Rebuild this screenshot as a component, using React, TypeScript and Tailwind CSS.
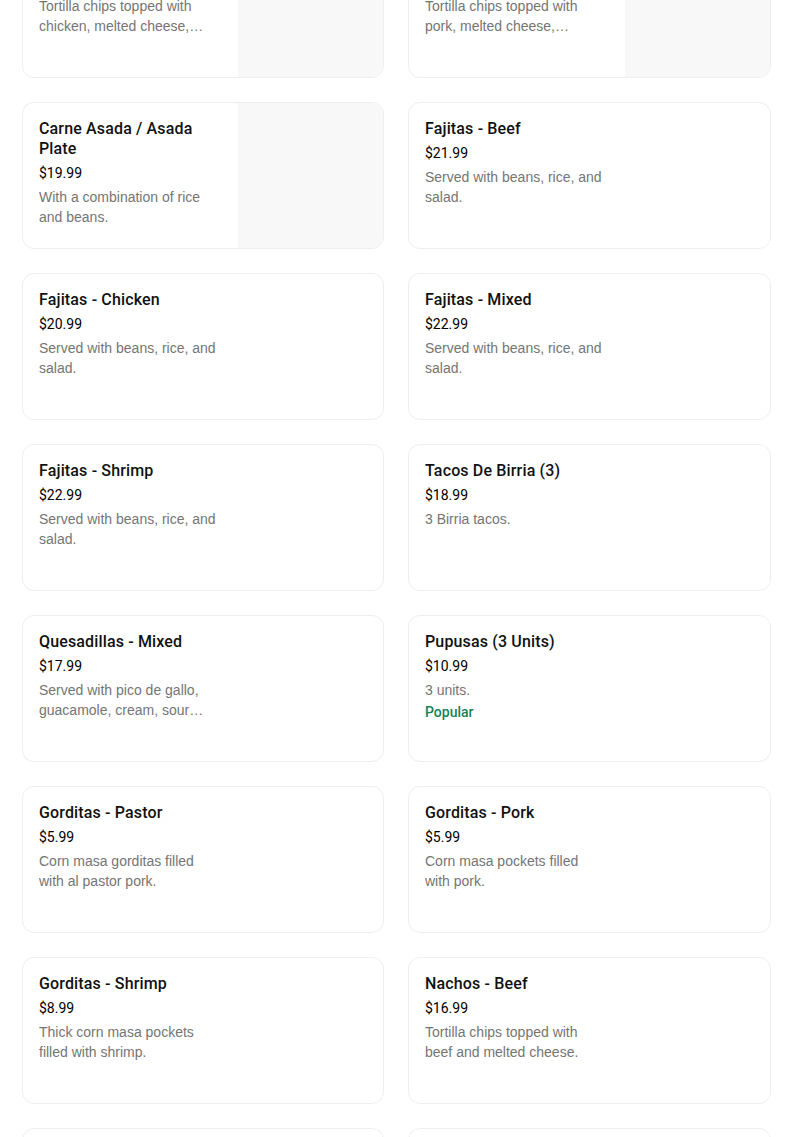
import React from "react";

type Item = { title: string; price: string; desc: string; image?: boolean; popular?: boolean };

const items: Item[] = [
  { title: "Nachos - Chicken", price: "$16.99", desc: "Tortilla chips topped with chicken, melted cheese, guacamole, pico de gallo and sour cream.", image: true },
  { title: "Nachos - Pork", price: "$16.99", desc: "Tortilla chips topped with pork, melted cheese, guacamole, pico de gallo and sour cream.", image: true },
  { title: "Carne Asada / Asada Plate", price: "$19.99", desc: "With a combination of rice and beans.", image: true },
  { title: "Fajitas - Beef", price: "$21.99", desc: "Served with beans, rice, and salad." },
  { title: "Fajitas - Chicken", price: "$20.99", desc: "Served with beans, rice, and salad." },
  { title: "Fajitas - Mixed", price: "$22.99", desc: "Served with beans, rice, and salad." },
  { title: "Fajitas - Shrimp", price: "$22.99", desc: "Served with beans, rice, and salad." },
  { title: "Tacos De Birria (3)", price: "$18.99", desc: "3 Birria tacos." },
  { title: "Quesadillas - Mixed", price: "$17.99", desc: "Served with pico de gallo, guacamole, cream, sour cream and salad." },
  { title: "Pupusas (3 Units)", price: "$10.99", desc: "3 units.", popular: true },
  { title: "Gorditas - Pastor", price: "$5.99", desc: "Corn masa gorditas filled with al pastor pork." },
  { title: "Gorditas - Pork", price: "$5.99", desc: "Corn masa pockets filled with pork." },
  { title: "Gorditas - Shrimp", price: "$8.99", desc: "Thick corn masa pockets filled with shrimp." },
  { title: "Nachos - Beef", price: "$16.99", desc: "Tortilla chips topped with beef and melted cheese." },
  { title: "Nachos - Mixed", price: "$18.99", desc: "Tortilla chips topped with mixed meat and melted cheese." },
  { title: "Tostadas", price: "$4.99", desc: "Crispy tortilla topped with beans." },
];

function Card({ item }: { item: Item }) {
  return (
    <div className="flex h-[147px] overflow-hidden rounded-[12px] border border-[#eeeeee] bg-white">
      <div className="flex-1 pl-[16px] pt-[16px] pr-[16px]">
        <div className="w-[180px]">
          <div className="font-['Roboto',sans-serif] text-[16px] leading-[20px] font-medium tracking-[0.15px] text-[#111111]">{item.title}</div>
          <div className="mt-[4px] font-['Roboto',sans-serif] text-[14px] leading-[20px] text-black">{item.price}</div>
          <div className="mt-[4px] line-clamp-2 text-[14px] leading-[20px] text-[#757575]">{item.desc}</div>
          {item.popular && (
            <div className="mt-[2px] font-['Roboto',sans-serif] text-[14px] leading-[20px] font-medium text-[#1a8250]">Popular</div>
          )}
        </div>
      </div>
      {item.image && <div className="w-[145px] shrink-0 bg-[#f8f8f8]" />}
    </div>
  );
}

export default function App() {
  return (
    <div
      className="h-[1137px] overflow-hidden bg-white"
      style={{ fontFamily: "'Liberation Sans', Arial, sans-serif" }}
    >
      <div className="-mt-[69px] grid grid-cols-[362px_363px] gap-x-[24px] gap-y-[24px] pl-[22px]">
        {items.map((it, i) => (
          <Card key={i} item={it} />
        ))}
      </div>
    </div>
  );
}
